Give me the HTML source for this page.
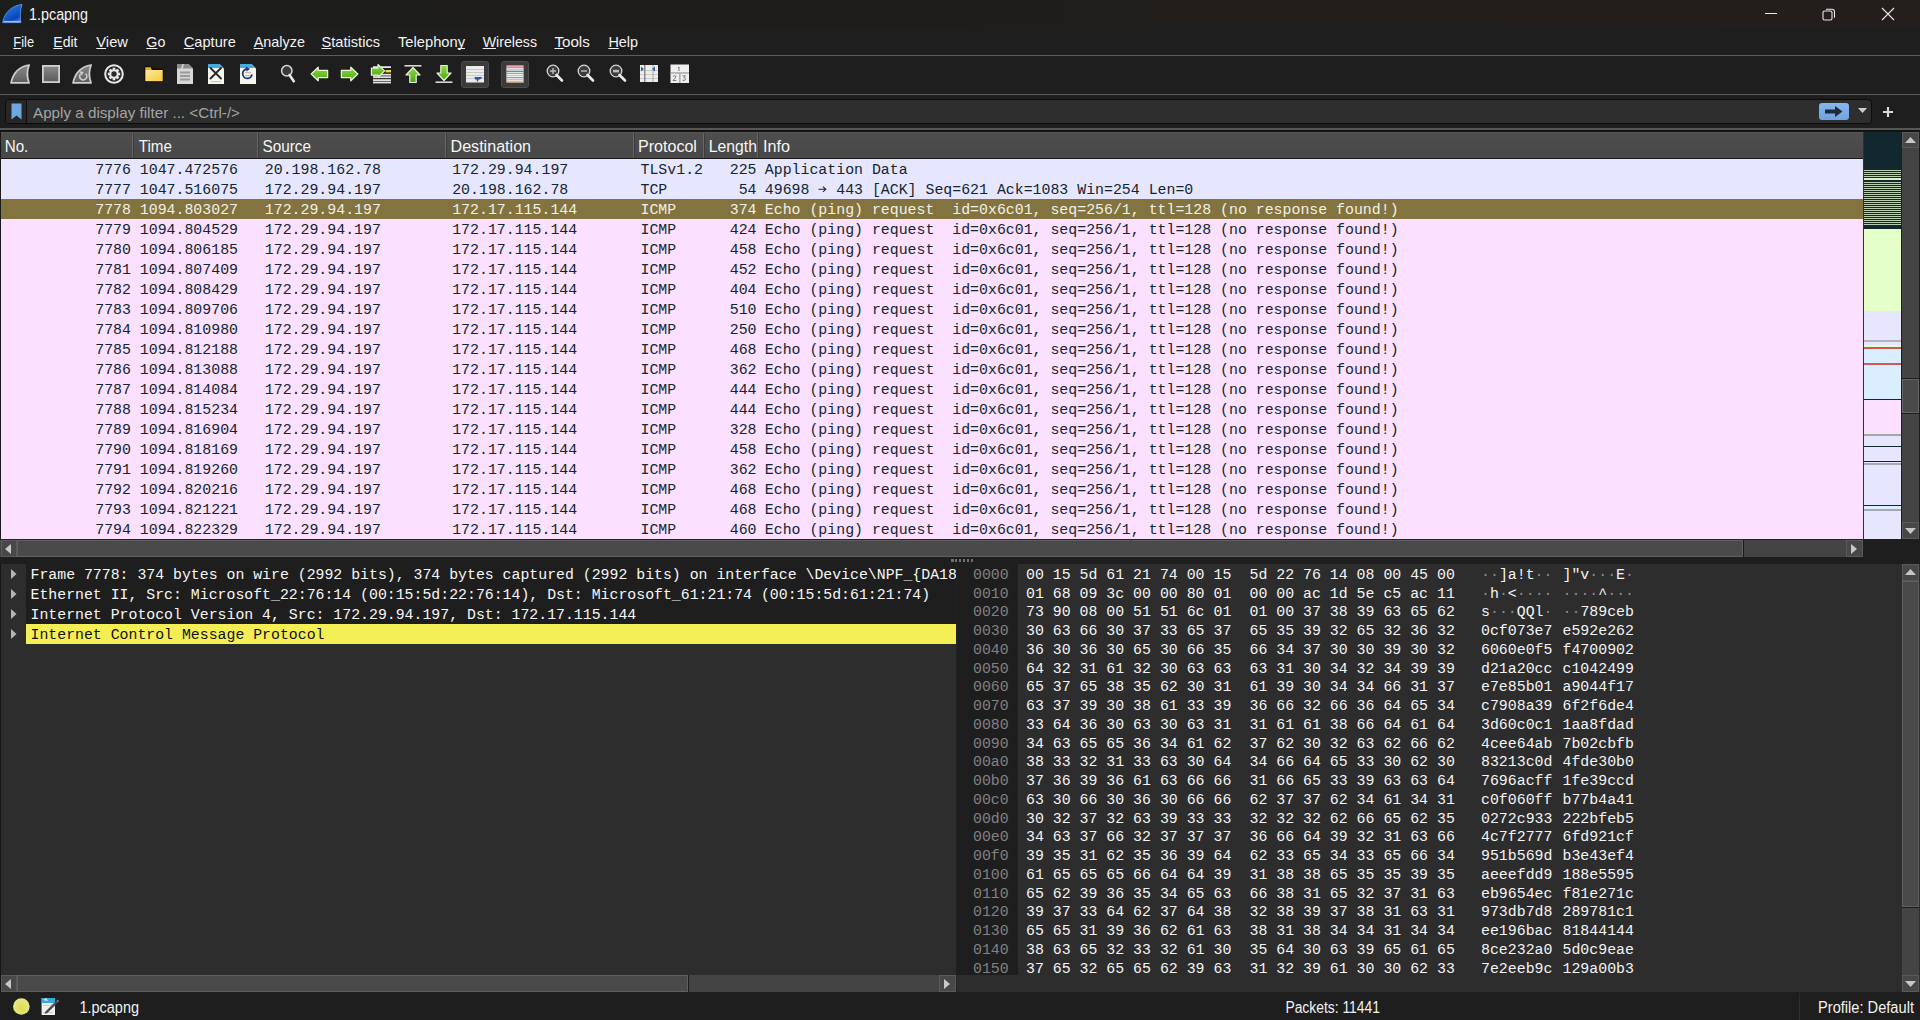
<!DOCTYPE html><html><head><meta charset="utf-8"><style>
*{margin:0;padding:0;box-sizing:border-box}
html,body{width:1920px;height:1020px;overflow:hidden;background:#1e1e1e;font-family:"Liberation Sans",sans-serif;color:#fff}
.a{position:absolute}
.mi{position:absolute;top:33px;font-size:15px;color:#f2f2f2;white-space:pre}
.mi u{text-decoration:underline;text-underline-offset:2px}
.hl{position:absolute;left:0;width:1920px;height:1px;background:#5c5c5c}
.m{font-family:"Liberation Mono",monospace;white-space:pre}
.t{position:absolute;white-space:pre}
</style></head><body>
<div class="a" style="left:0;top:0;width:1920px;height:28px;background:linear-gradient(90deg,#1d1d1b 0%,#1f1d1b 50%,#241e1c 100%)"></div>
<svg class="a" style="left:0;top:0" width="26" height="26" viewBox="0 0 26 26"><defs><linearGradient id="lg1" x1="0" y1="0" x2="0.6" y2="1"><stop offset="0" stop-color="#2a86f0"/><stop offset="0.85" stop-color="#0b44b8"/><stop offset="1" stop-color="#3a6ad0"/></linearGradient></defs><path d="M22 4.4 C13 5.5 5 11 2.6 22.6 L20.9 22.6 C19.9 17 19.9 10 22 4.4Z" fill="url(#lg1)" stroke="#5a9ae8" stroke-width="0.9" stroke-linejoin="round"/><path d="M3.5 21.6 L20.4 21.6" stroke="#a8bce8" stroke-width="1.4"/></svg>
<div class="a" style="left:1765px;top:13px;width:12px;height:1px;background:#e8e8e8"></div>
<svg class="a" style="left:1822px;top:7px" width="14" height="14" viewBox="0 0 14 14"><path d="M3.5 3.5 h7 a1.5 1.5 0 0 1 1.5 1.5 v0" fill="none"/><rect x="1" y="4" width="9" height="9" rx="1.5" fill="none" stroke="#e8e8e8" stroke-width="1.1"/><path d="M4 2.2 h6 a2.5 2.5 0 0 1 2.5 2.5 v6" fill="none" stroke="#e8e8e8" stroke-width="1.1"/></svg>
<svg class="a" style="left:1881px;top:7px" width="14" height="14" viewBox="0 0 14 14"><path d="M1 1 L13 13 M13 1 L1 13" stroke="#e8e8e8" stroke-width="1.1"/></svg>
<div class="hl" style="top:55px"></div>
<div class="hl" style="top:94px"></div>
<svg width="0" height="0" class="a"><defs><linearGradient id="gg" x1="0" y1="0" x2="0" y2="1"><stop offset="0" stop-color="#8a8a8a"/><stop offset="1" stop-color="#5c5c5c"/></linearGradient><linearGradient id="fold" x1="0" y1="0" x2="1" y2="1"><stop offset="0" stop-color="#fbe9a0"/><stop offset="1" stop-color="#f9c93a"/></linearGradient><linearGradient id="grn" x1="0" y1="0" x2="0" y2="1"><stop offset="0" stop-color="#8ed84a"/><stop offset="1" stop-color="#4aa80e"/></linearGradient></defs></svg>
<svg class="a" style="left:9px;top:62px" width="22" height="24" viewBox="0 0 22 24"><path d="M20.2 3 C12 4.2 4.5 9.5 2 20.9 L20 20.9 C18 15.2 17.6 8.8 20.2 3Z" fill="url(#gg)" stroke="#cfcfcf" stroke-width="1.7" stroke-linejoin="round"/></svg>
<svg class="a" style="left:41px;top:64px" width="20" height="20" viewBox="0 0 20 20"><rect x="1.9" y="1.9" width="16.2" height="16.2" fill="url(#gg)" stroke="#d0d0d0" stroke-width="1.8"/></svg>
<svg class="a" style="left:71px;top:62px" width="22" height="24" viewBox="0 0 22 24"><path d="M20.2 3 C12 4.2 4.5 9.5 2 20.9 L20 20.9 C18 15.2 17.6 8.8 20.2 3Z" fill="url(#gg)" stroke="#cfcfcf" stroke-width="1.7" stroke-linejoin="round"/><path d="M14.5 11.5 A3.6 3.6 0 1 1 9.5 12" fill="none" stroke="#d0d0d0" stroke-width="1.5"/><path d="M8 9 L12.5 10 L11 13.5Z" fill="#d0d0d0"/></svg>
<svg class="a" style="left:104px;top:64px" width="20" height="20" viewBox="0 0 20 20"><circle cx="10" cy="10" r="8.8" fill="#262626" stroke="#e8e8e8" stroke-width="2"/><polygon points="8.75,3.83 11.25,3.83 11.49,5.65 12.02,5.87 13.48,4.75 15.25,6.52 14.13,7.98 14.35,8.51 16.17,8.75 16.17,11.25 14.35,11.49 14.13,12.02 15.25,13.48 13.48,15.25 12.02,14.13 11.49,14.35 11.25,16.17 8.75,16.17 8.51,14.35 7.98,14.13 6.52,15.25 4.75,13.48 5.87,12.02 5.65,11.49 3.83,11.25 3.83,8.75 5.65,8.51 5.87,7.98 4.75,6.52 6.52,4.75 7.98,5.87 8.51,5.65" fill="#e6e6e6"/><circle cx="10" cy="10" r="2.7" fill="#2a2a2a"/></svg>
<svg class="a" style="left:143px;top:65px" width="22" height="18" viewBox="0 0 22 18"><path d="M2 2 h6 l1.5 2 h10.5 v12.5 h-18Z" fill="#1a0e00" stroke="#1a0e00" stroke-width="1.3"/><path d="M2.3 5 h17.4 v11.2 h-17.4Z" fill="url(#fold)"/><path d="M2.3 2.3 h5.5 l1 2.7 h-6.5Z" fill="#f0b020"/></svg>
<svg class="a" style="left:176px;top:63px" width="18" height="22" viewBox="0 0 18 22"><path d="M1 1 h11.5 l4.5 4.5 v15.5 h-16Z" fill="#d8d8d8"/><path d="M1 1 h11.5 l4.5 4.5 h-16Z" fill="#8c8c8c"/><path d="M5 5.5 L6.5 1 h1.3 L7 5.5Z" fill="#d8d8d8"/><g fill="#9a9a9a"><rect x="4" y="8.5" width="10" height="2"/><rect x="4" y="12" width="10" height="2"/><rect x="4" y="15.5" width="10" height="2"/></g></svg>
<svg class="a" style="left:207px;top:63px" width="18" height="22" viewBox="0 0 18 22"><path d="M1 1 h11.5 l4.5 4.5 v15.5 h-16Z" fill="#f4f6f0"/><path d="M1 1 h11.5 l4 4 h-15.5Z" fill="#4aa8e0"/><g fill="#c8c8c8"><rect x="4" y="18" width="10" height="1.2"/></g><path d="M3.5 5 L14 15.5 M14 5 L3.5 15.5" stroke="#2a2a2a" stroke-width="1.9" stroke-linecap="round"/></svg>
<svg class="a" style="left:239px;top:63px" width="18" height="22" viewBox="0 0 18 22"><path d="M1 1 h11.5 l4.5 4.5 v15.5 h-16Z" fill="#f4f6f0"/><path d="M1 1 h11.5 l4 4 h-15.5Z" fill="#4aa8e0"/><g fill="#d0b8b8"><rect x="6" y="9" width="6" height="1.2"/><rect x="6" y="12" width="6" height="1.2"/></g><path d="M13 11.5 A4.7 4.7 0 1 1 8.5 6" fill="none" stroke="#203a70" stroke-width="1.8"/><path d="M7 3.5 L11 6 L7.5 8.5Z" fill="#203a70"/></svg>
<svg class="a" style="left:280px;top:64px" width="17" height="20" viewBox="0 0 17 20"><circle cx="6.8" cy="6.8" r="5.2" fill="#3a3a3a" stroke="#d8d8d8" stroke-width="1.5"/><path d="M9.5 11 L13.8 17.3" stroke="#e8e8e8" stroke-width="2.6" stroke-linecap="round"/></svg>
<svg class="a" style="left:310px;top:66px" width="19" height="16" viewBox="0 0 19 16"><g><path d="M1.2 8 L8.2 1.2 V4.4 H17.6 V11.6 H8.2 V14.8Z" fill="url(#grn)" stroke="#e8f5d8" stroke-width="1.3" stroke-linejoin="round"/></g></svg>
<svg class="a" style="left:340px;top:66px" width="19" height="16" viewBox="0 0 19 16"><g transform="translate(19,0) scale(-1,1)"><path d="M1.2 8 L8.2 1.2 V4.4 H17.6 V11.6 H8.2 V14.8Z" fill="url(#grn)" stroke="#e8f5d8" stroke-width="1.3" stroke-linejoin="round"/></g></svg>
<svg class="a" style="left:370px;top:62px" width="22" height="22" viewBox="0 0 22 22"><g fill="#e2e2e2"><rect x="3" y="4.2" width="18" height="1.8"/><rect x="3" y="11.8" width="18" height="1.8"/><rect x="3" y="14.3" width="18" height="1.8"/><rect x="3" y="17.2" width="18" height="1.8"/><rect x="3" y="19.6" width="18" height="1.8"/></g><rect x="3" y="14.3" width="4" height="1.8" fill="#f0c8c8"/><rect x="15.5" y="8" width="5.5" height="2.4" fill="#ecd850"/><path d="M1.4 6.2 H8 V2.5 L14.6 8.9 L8 15.3 V13.2 H1.4Z" fill="url(#grn)" stroke="#e4f5d0" stroke-width="1.2" stroke-linejoin="round"/></svg>
<svg class="a" style="left:403px;top:64px" width="20" height="20" viewBox="0 0 20 20"><rect x="1.5" y="1" width="17" height="1.6" fill="#d8d8d8"/><path d="M10 3.5 L17 11 H13.2 V18.5 H6.8 V11 H3Z" fill="url(#grn)" stroke="#e8f5d8" stroke-width="1.2" stroke-linejoin="round"/></svg>
<svg class="a" style="left:434px;top:64px" width="20" height="20" viewBox="0 0 20 20"><rect x="1.5" y="17.4" width="17" height="1.6" fill="#d8d8d8"/><path d="M10 16.5 L17 9 H13.2 V1.5 H6.8 V9 H3Z" fill="url(#grn)" stroke="#e8f5d8" stroke-width="1.2" stroke-linejoin="round"/></svg>
<div class="a" style="left:461px;top:61px;width:28px;height:27px;background:#3b3b3b;border:1px solid #4c4c4c;border-radius:3px"></div>
<svg class="a" style="left:465px;top:65px" width="20" height="18" viewBox="0 0 20 18"><rect x="1" y="1" width="18" height="16.5" fill="#ececec"/><g fill="#c9c9c9"><rect x="1" y="4" width="18" height="1"/><rect x="1" y="7" width="18" height="1"/><rect x="1" y="10" width="18" height="1"/><rect x="1" y="13" width="18" height="1"/></g><path d="M9.5 12 h8 l-2.5 2.5 h-1.5 l-0.5 2 h-1 l-0.5-2 h-1.5Z" fill="#2b5aa8"/></svg>
<div class="a" style="left:501px;top:61px;width:28px;height:27px;background:#3b3b3b;border:1px solid #4c4c4c;border-radius:3px"></div>
<svg class="a" style="left:506px;top:65px" width="18" height="18" viewBox="0 0 18 18"><rect x="0.5" y="0.5" width="17" height="17" fill="#f4f4f4"/><g><rect x="0.5" y="1.5" width="17" height="1.2" fill="#e05a5a"/><rect x="0.5" y="3.6" width="17" height="1.2" fill="#f0a8b0"/><rect x="0.5" y="5.7" width="17" height="1.2" fill="#4a7ad8"/><rect x="0.5" y="7.8" width="17" height="1.2" fill="#78c850"/><rect x="0.5" y="9.9" width="17" height="1.2" fill="#a8e088"/><rect x="0.5" y="12" width="17" height="1.2" fill="#9090e0"/><rect x="0.5" y="14.1" width="17" height="1.2" fill="#f0a8a0"/><rect x="0.5" y="16" width="17" height="1.2" fill="#e8c840"/></g></svg>
<svg class="a" style="left:546px;top:64px" width="19" height="20" viewBox="0 0 19 20"><circle cx="7" cy="7" r="5.8" fill="#3c3c3c" stroke="#d6d6d6" stroke-width="1.3"/><path d="M4 7 H10 M7 4 V10" stroke="#bdbdbd" stroke-width="1.4"/><path d="M10.5 11 L16 16.5" stroke="#ececec" stroke-width="2.6" stroke-linecap="round"/></svg>
<svg class="a" style="left:577px;top:64px" width="19" height="20" viewBox="0 0 19 20"><circle cx="7" cy="7" r="5.8" fill="#3c3c3c" stroke="#d6d6d6" stroke-width="1.3"/><path d="M4 7 H10" stroke="#bdbdbd" stroke-width="1.4"/><path d="M10.5 11 L16 16.5" stroke="#ececec" stroke-width="2.6" stroke-linecap="round"/></svg>
<svg class="a" style="left:609px;top:64px" width="19" height="20" viewBox="0 0 19 20"><circle cx="7" cy="7" r="5.8" fill="#3c3c3c" stroke="#d6d6d6" stroke-width="1.3"/><rect x="4" y="5.8" width="6" height="2.6" fill="#bdbdbd"/><path d="M10.5 11 L16 16.5" stroke="#ececec" stroke-width="2.6" stroke-linecap="round"/></svg>
<svg class="a" style="left:639px;top:64px" width="20" height="19" viewBox="0 0 20 19"><rect x="1" y="1" width="18" height="17" fill="#ededed"/><g fill="#c8c8c8"><rect x="1" y="6" width="18" height="1"/><rect x="1" y="10" width="18" height="1"/><rect x="1" y="14" width="18" height="1"/></g><rect x="5" y="1" width="1.5" height="17" fill="#8a8a8a"/><rect x="13.5" y="1" width="1" height="17" fill="#a8a8a8"/><path d="M2 2.5 L5 5 L2 7.5Z M16 2.5 L13 5 L16 7.5Z" fill="#3060b0"/></svg>
<svg class="a" style="left:670px;top:64px" width="20" height="20" viewBox="0 0 20 20"><rect x="0.5" y="0.5" width="18.5" height="18.5" fill="#efefef"/><rect x="0.5" y="8.3" width="18.5" height="1.3" fill="#a0a0a0"/><rect x="9.2" y="9" width="1.3" height="10" fill="#a0a0a0"/><path d="M9 3 V7 M8 3.8 L9 3" stroke="#707070" stroke-width="0.9" fill="none"/><path d="M3 12.5 Q4.5 11 6 12.3 Q6 13.5 3 16.5 H6.3" stroke="#707070" stroke-width="0.9" fill="none"/><path d="M12.6 11.8 H15.5 L13.8 13.6 Q16 13.8 15.4 15.6 Q14.5 17 12.5 16.2" stroke="#707070" stroke-width="0.9" fill="none"/></svg>
<div class="a" style="left:0;top:128px;width:1920px;height:2px;background:#575757"></div>
<div class="a" style="left:0;top:130px;width:1920px;height:2px;background:#141414"></div>
<div class="a" style="left:5px;top:99px;width:1867px;height:25px;background:#2e2e2e;border:1px solid #0c0c0c;border-radius:4px"></div>
<div class="a" style="left:6px;top:100px;width:21px;height:23px;background:#262626;border-right:1px solid #0c0c0c;border-radius:3px 0 0 3px"></div>
<svg class="a" style="left:11px;top:103px" width="11" height="17" viewBox="0 0 11 17"><path d="M0.5 0.5 H10.5 V16.5 L5.5 12.5 L0.5 16.5Z" fill="#6fa8e0"/></svg>
<div class="a" style="left:1819px;top:103px;width:30px;height:17px;background:linear-gradient(#86b6ec,#6fa2e0);border-radius:3px"></div>
<svg class="a" style="left:1823px;top:104px" width="22" height="15" viewBox="0 0 22 15"><path d="M2 5.5 H12 V2 L19.5 7.5 L12 13 V9.5 H2Z" fill="#1f2a36"/></svg>
<svg class="a" style="left:1857px;top:107px" width="11" height="7" viewBox="0 0 11 7"><path d="M1 1 H10 L5.5 6Z" fill="#d0d0d0"/></svg>
<svg class="a" style="left:1882px;top:106px" width="12" height="12" viewBox="0 0 12 12"><path d="M6 1 V11 M1 6 H11" stroke="#d8d8d8" stroke-width="2.2"/></svg>
<div class="a" style="left:0;top:132px;width:1863px;height:27px;background:linear-gradient(#4e4e4e,#484848);border-top:1px solid #555;border-bottom:1px solid #1a1a1a"></div>
<div class="a" style="left:132px;top:133px;width:1px;height:25px;background:#676767"></div>
<div class="a" style="left:133px;top:133px;width:1px;height:25px;background:#3c3c3c"></div>
<div class="a" style="left:257px;top:133px;width:1px;height:25px;background:#676767"></div>
<div class="a" style="left:258px;top:133px;width:1px;height:25px;background:#3c3c3c"></div>
<div class="a" style="left:445px;top:133px;width:1px;height:25px;background:#676767"></div>
<div class="a" style="left:446px;top:133px;width:1px;height:25px;background:#3c3c3c"></div>
<div class="a" style="left:633px;top:133px;width:1px;height:25px;background:#676767"></div>
<div class="a" style="left:634px;top:133px;width:1px;height:25px;background:#3c3c3c"></div>
<div class="a" style="left:703px;top:133px;width:1px;height:25px;background:#676767"></div>
<div class="a" style="left:704px;top:133px;width:1px;height:25px;background:#3c3c3c"></div>
<div class="a" style="left:757px;top:133px;width:1px;height:25px;background:#676767"></div>
<div class="a" style="left:758px;top:133px;width:1px;height:25px;background:#3c3c3c"></div>
<style>.pr{position:absolute;left:1px;width:1862px;height:20px}.pr span{position:absolute;top:1px;line-height:20px;font-family:"Liberation Mono",monospace;font-size:14.88px;white-space:pre;color:#12272e}.tcp{background:#e7e6ff}.icmp{background:#fce0ff}.sel{background:#83733f}.sel span{color:#f2efe6}</style>
<div class="pr tcp" style="top:159px"><span style="left:94.28px">7776</span><span style="left:138.80px">1047.472576</span><span style="left:263.80px">20.198.162.78</span><span style="left:451.20px">172.29.94.197</span><span style="left:639.50px">TLSv1.2</span><span style="left:728.71px">225</span><span style="left:763.80px">Application Data</span></div>
<div class="pr tcp" style="top:179px"><span style="left:94.28px">7777</span><span style="left:138.80px">1047.516075</span><span style="left:263.80px">172.29.94.197</span><span style="left:451.20px">20.198.162.78</span><span style="left:639.50px">TCP</span><span style="left:737.64px">54</span><span style="left:763.80px">49698 <svg width="8.93" height="10" viewBox="0 0 9 10" style="vertical-align:0"><path d="M0.5 5.3 H7.8 M5 2.6 L7.9 5.3 L5 8" fill="none" stroke="#12272e" stroke-width="1.05"/></svg> 443 [ACK] Seq=621 Ack=1083 Win=254 Len=0</span></div>
<div class="pr sel" style="top:199px"><span style="left:94.28px">7778</span><span style="left:138.80px">1094.803027</span><span style="left:263.80px">172.29.94.197</span><span style="left:451.20px">172.17.115.144</span><span style="left:639.50px">ICMP</span><span style="left:728.71px">374</span><span style="left:763.80px">Echo (ping) request  id=0x6c01, seq=256/1, ttl=128 (no response found!)</span></div>
<div class="pr icmp" style="top:219px"><span style="left:94.28px">7779</span><span style="left:138.80px">1094.804529</span><span style="left:263.80px">172.29.94.197</span><span style="left:451.20px">172.17.115.144</span><span style="left:639.50px">ICMP</span><span style="left:728.71px">424</span><span style="left:763.80px">Echo (ping) request  id=0x6c01, seq=256/1, ttl=128 (no response found!)</span></div>
<div class="pr icmp" style="top:239px"><span style="left:94.28px">7780</span><span style="left:138.80px">1094.806185</span><span style="left:263.80px">172.29.94.197</span><span style="left:451.20px">172.17.115.144</span><span style="left:639.50px">ICMP</span><span style="left:728.71px">458</span><span style="left:763.80px">Echo (ping) request  id=0x6c01, seq=256/1, ttl=128 (no response found!)</span></div>
<div class="pr icmp" style="top:259px"><span style="left:94.28px">7781</span><span style="left:138.80px">1094.807409</span><span style="left:263.80px">172.29.94.197</span><span style="left:451.20px">172.17.115.144</span><span style="left:639.50px">ICMP</span><span style="left:728.71px">452</span><span style="left:763.80px">Echo (ping) request  id=0x6c01, seq=256/1, ttl=128 (no response found!)</span></div>
<div class="pr icmp" style="top:279px"><span style="left:94.28px">7782</span><span style="left:138.80px">1094.808429</span><span style="left:263.80px">172.29.94.197</span><span style="left:451.20px">172.17.115.144</span><span style="left:639.50px">ICMP</span><span style="left:728.71px">404</span><span style="left:763.80px">Echo (ping) request  id=0x6c01, seq=256/1, ttl=128 (no response found!)</span></div>
<div class="pr icmp" style="top:299px"><span style="left:94.28px">7783</span><span style="left:138.80px">1094.809706</span><span style="left:263.80px">172.29.94.197</span><span style="left:451.20px">172.17.115.144</span><span style="left:639.50px">ICMP</span><span style="left:728.71px">510</span><span style="left:763.80px">Echo (ping) request  id=0x6c01, seq=256/1, ttl=128 (no response found!)</span></div>
<div class="pr icmp" style="top:319px"><span style="left:94.28px">7784</span><span style="left:138.80px">1094.810980</span><span style="left:263.80px">172.29.94.197</span><span style="left:451.20px">172.17.115.144</span><span style="left:639.50px">ICMP</span><span style="left:728.71px">250</span><span style="left:763.80px">Echo (ping) request  id=0x6c01, seq=256/1, ttl=128 (no response found!)</span></div>
<div class="pr icmp" style="top:339px"><span style="left:94.28px">7785</span><span style="left:138.80px">1094.812188</span><span style="left:263.80px">172.29.94.197</span><span style="left:451.20px">172.17.115.144</span><span style="left:639.50px">ICMP</span><span style="left:728.71px">468</span><span style="left:763.80px">Echo (ping) request  id=0x6c01, seq=256/1, ttl=128 (no response found!)</span></div>
<div class="pr icmp" style="top:359px"><span style="left:94.28px">7786</span><span style="left:138.80px">1094.813088</span><span style="left:263.80px">172.29.94.197</span><span style="left:451.20px">172.17.115.144</span><span style="left:639.50px">ICMP</span><span style="left:728.71px">362</span><span style="left:763.80px">Echo (ping) request  id=0x6c01, seq=256/1, ttl=128 (no response found!)</span></div>
<div class="pr icmp" style="top:379px"><span style="left:94.28px">7787</span><span style="left:138.80px">1094.814084</span><span style="left:263.80px">172.29.94.197</span><span style="left:451.20px">172.17.115.144</span><span style="left:639.50px">ICMP</span><span style="left:728.71px">444</span><span style="left:763.80px">Echo (ping) request  id=0x6c01, seq=256/1, ttl=128 (no response found!)</span></div>
<div class="pr icmp" style="top:399px"><span style="left:94.28px">7788</span><span style="left:138.80px">1094.815234</span><span style="left:263.80px">172.29.94.197</span><span style="left:451.20px">172.17.115.144</span><span style="left:639.50px">ICMP</span><span style="left:728.71px">444</span><span style="left:763.80px">Echo (ping) request  id=0x6c01, seq=256/1, ttl=128 (no response found!)</span></div>
<div class="pr icmp" style="top:419px"><span style="left:94.28px">7789</span><span style="left:138.80px">1094.816904</span><span style="left:263.80px">172.29.94.197</span><span style="left:451.20px">172.17.115.144</span><span style="left:639.50px">ICMP</span><span style="left:728.71px">328</span><span style="left:763.80px">Echo (ping) request  id=0x6c01, seq=256/1, ttl=128 (no response found!)</span></div>
<div class="pr icmp" style="top:439px"><span style="left:94.28px">7790</span><span style="left:138.80px">1094.818169</span><span style="left:263.80px">172.29.94.197</span><span style="left:451.20px">172.17.115.144</span><span style="left:639.50px">ICMP</span><span style="left:728.71px">458</span><span style="left:763.80px">Echo (ping) request  id=0x6c01, seq=256/1, ttl=128 (no response found!)</span></div>
<div class="pr icmp" style="top:459px"><span style="left:94.28px">7791</span><span style="left:138.80px">1094.819260</span><span style="left:263.80px">172.29.94.197</span><span style="left:451.20px">172.17.115.144</span><span style="left:639.50px">ICMP</span><span style="left:728.71px">362</span><span style="left:763.80px">Echo (ping) request  id=0x6c01, seq=256/1, ttl=128 (no response found!)</span></div>
<div class="pr icmp" style="top:479px"><span style="left:94.28px">7792</span><span style="left:138.80px">1094.820216</span><span style="left:263.80px">172.29.94.197</span><span style="left:451.20px">172.17.115.144</span><span style="left:639.50px">ICMP</span><span style="left:728.71px">468</span><span style="left:763.80px">Echo (ping) request  id=0x6c01, seq=256/1, ttl=128 (no response found!)</span></div>
<div class="pr icmp" style="top:499px"><span style="left:94.28px">7793</span><span style="left:138.80px">1094.821221</span><span style="left:263.80px">172.29.94.197</span><span style="left:451.20px">172.17.115.144</span><span style="left:639.50px">ICMP</span><span style="left:728.71px">468</span><span style="left:763.80px">Echo (ping) request  id=0x6c01, seq=256/1, ttl=128 (no response found!)</span></div>
<div class="pr icmp" style="top:519px"><span style="left:94.28px">7794</span><span style="left:138.80px">1094.822329</span><span style="left:263.80px">172.29.94.197</span><span style="left:451.20px">172.17.115.144</span><span style="left:639.50px">ICMP</span><span style="left:728.71px">460</span><span style="left:763.80px">Echo (ping) request  id=0x6c01, seq=256/1, ttl=128 (no response found!)</span></div>
<div class="a" style="left:0;top:132px;width:1px;height:408px;background:#1a1a1a"></div>
<div class="a" style="left:1863px;top:132px;width:1px;height:408px;background:#2a2a2a;"></div>
<div class="a" style="left:1864px;top:170px;width:37px;height:56px;background:repeating-linear-gradient(#b9cdb2 0 1px,#12272e 1px 2px)"></div>
<div class="a" style="left:1864px;top:178px;width:37px;height:2px;background:#d8f0c8"></div>
<div class="a" style="left:1864px;top:180px;width:37px;height:2px;background:#12272e"></div>
<div class="a" style="left:1864px;top:132px;width:37px;height:38px;background:#12272e;"></div>
<div class="a" style="left:1864px;top:226px;width:37px;height:3px;background:#12272e;"></div>
<div class="a" style="left:1864px;top:229px;width:37px;height:82px;background:#e4ffc7;"></div>
<div class="a" style="left:1864px;top:311px;width:37px;height:29px;background:#e7e6ff;"></div>
<div class="a" style="left:1864px;top:340px;width:37px;height:2px;background:#b4b4b8;"></div>
<div class="a" style="left:1864px;top:342px;width:37px;height:3px;background:#e7e6ff;"></div>
<div class="a" style="left:1864px;top:345px;width:37px;height:2px;background:#e4ffc7;"></div>
<div class="a" style="left:1864px;top:347px;width:37px;height:2px;background:#c85a5a;"></div>
<div class="a" style="left:1864px;top:349px;width:37px;height:14px;background:#daeeff;"></div>
<div class="a" style="left:1864px;top:363px;width:37px;height:2px;background:#c85a5a;"></div>
<div class="a" style="left:1864px;top:365px;width:37px;height:34px;background:#daeeff;"></div>
<div class="a" style="left:1864px;top:399px;width:37px;height:1px;background:#12272e;"></div>
<div class="a" style="left:1864px;top:400px;width:37px;height:34px;background:#fce0ff;"></div>
<div class="a" style="left:1864px;top:434px;width:37px;height:2px;background:#a8a8a0;"></div>
<div class="a" style="left:1864px;top:436px;width:37px;height:10px;background:#e7e6ff;"></div>
<div class="a" style="left:1864px;top:446px;width:37px;height:1px;background:#12272e;"></div>
<div class="a" style="left:1864px;top:447px;width:37px;height:14px;background:#e7e6ff;"></div>
<div class="a" style="left:1864px;top:461px;width:37px;height:1px;background:#12272e;"></div>
<div class="a" style="left:1864px;top:462px;width:37px;height:1px;background:#e7e6ff;"></div>
<div class="a" style="left:1864px;top:463px;width:37px;height:2px;background:#a8a8b0;"></div>
<div class="a" style="left:1864px;top:465px;width:37px;height:40px;background:#e7e6ff;"></div>
<div class="a" style="left:1864px;top:505px;width:37px;height:1px;background:#12272e;"></div>
<div class="a" style="left:1864px;top:506px;width:37px;height:3px;background:#daeeff;"></div>
<div class="a" style="left:1864px;top:509px;width:37px;height:2px;background:#a8a8b0;"></div>
<div class="a" style="left:1864px;top:511px;width:37px;height:28px;background:#e7e6ff;"></div>
<div class="a" style="left:1863px;top:132px;width:1px;height:408px;background:#303030;"></div>
<div class="a" style="left:1901px;top:132px;width:19px;height:408px;background:#1e1e1e;"></div>
<div class="a" style="left:1902px;top:132px;width:17px;height:407px;background:#444444;"></div>
<div class="a" style="left:1902px;top:132px;width:17px;height:16px;background:#484848;border:1px solid #5a5a5a"></div>
<svg class="a" style="left:1905px;top:137px" width="11" height="6" viewBox="0 0 11 6"><path d="M0 6 L5.5 0 L11 6Z" fill="#c8c8c8"/></svg>
<div class="a" style="left:1902px;top:378px;width:17px;height:1px;background:#1c1c1c;"></div>
<div class="a" style="left:1902px;top:379px;width:17px;height:34px;background:#4a4a4a;border:1px solid #656565"></div>
<div class="a" style="left:1902px;top:413px;width:17px;height:1px;background:#1c1c1c;"></div>
<div class="a" style="left:1902px;top:522px;width:17px;height:17px;background:#484848;border:1px solid #5a5a5a"></div>
<svg class="a" style="left:1905px;top:528px" width="11" height="6" viewBox="0 0 11 6"><path d="M0 0 L11 0 L5.5 6Z" fill="#c8c8c8"/></svg>
<div class="a" style="left:0px;top:539px;width:1863px;height:1px;background:#2a2030;"></div>
<div class="a" style="left:0px;top:540px;width:1863px;height:17px;background:#444444;"></div>
<div class="a" style="left:1px;top:540px;width:16px;height:17px;background:#484848;border:1px solid #5a5a5a"></div>
<svg class="a" style="left:5px;top:544px" width="6" height="10" viewBox="0 0 6 10"><path d="M6 0 L0 5.0 L6 10Z" fill="#c8c8c8"/></svg>
<div class="a" style="left:17px;top:540px;width:1726px;height:17px;background:#4a4a4a;border:1px solid #606060"></div>
<div class="a" style="left:1743px;top:540px;width:1px;height:17px;background:#1c1c1c;"></div>
<div class="a" style="left:1846px;top:540px;width:17px;height:17px;background:#484848;border:1px solid #5a5a5a"></div>
<svg class="a" style="left:1851px;top:544px" width="6" height="10" viewBox="0 0 6 10"><path d="M0 0 L6 5.0 L0 10Z" fill="#c8c8c8"/></svg>
<div class="a" style="left:1863px;top:540px;width:57px;height:17px;background:#1e1e1e;"></div>
<div class="a" style="left:0px;top:557px;width:1920px;height:7px;background:#1e1e1e;"></div>
<div class="a" style="left:951.0px;top:559px;width:2.6px;height:3px;background:#707070;"></div>
<div class="a" style="left:954.9px;top:559px;width:2.6px;height:3px;background:#707070;"></div>
<div class="a" style="left:958.8px;top:559px;width:2.6px;height:3px;background:#707070;"></div>
<div class="a" style="left:962.7px;top:559px;width:2.6px;height:3px;background:#707070;"></div>
<div class="a" style="left:966.6px;top:559px;width:2.6px;height:3px;background:#707070;"></div>
<div class="a" style="left:970.5px;top:559px;width:2.6px;height:3px;background:#707070;"></div>
<div class="a" style="left:0px;top:564px;width:957px;height:428px;background:#2d2d2d;"></div>
<div class="a" style="left:0px;top:564px;width:1px;height:428px;background:#151515;"></div>
<div class="a" style="left:26px;top:564px;width:930px;height:80px;background:#1e1e1e;"></div>
<div class="a" style="left:956px;top:564px;width:1px;height:428px;background:#222;"></div>
<div class="a" style="left:26px;top:624px;width:930px;height:20px;background:#f4ee55;"></div>
<div class="a" style="left:26px;top:564px;width:930px;height:80px;overflow:hidden">
<div class="t m" style="left:4.5px;top:1px;line-height:20px;font-size:14.85px;color:#f6f6f6">Frame 7778: 374 bytes on wire (2992 bits), 374 bytes captured (2992 bits) on interface \Device\NPF_{DA18</div>
<div class="t m" style="left:4.5px;top:21px;line-height:20px;font-size:14.85px;color:#f6f6f6">Ethernet II, Src: Microsoft_22:76:14 (00:15:5d:22:76:14), Dst: Microsoft_61:21:74 (00:15:5d:61:21:74)</div>
<div class="t m" style="left:4.5px;top:41px;line-height:20px;font-size:14.85px;color:#f6f6f6">Internet Protocol Version 4, Src: 172.29.94.197, Dst: 172.17.115.144</div>
<div class="t m" style="left:4.5px;top:61px;line-height:20px;font-size:14.85px;color:#111">Internet Control Message Protocol</div>
</div>
<svg class="a" style="left:11px;top:569px" width="6" height="10" viewBox="0 0 6 10"><path d="M0 0 L5.5 5 L0 10Z" fill="#b4b4b4"/></svg>
<svg class="a" style="left:11px;top:589px" width="6" height="10" viewBox="0 0 6 10"><path d="M0 0 L5.5 5 L0 10Z" fill="#b4b4b4"/></svg>
<svg class="a" style="left:11px;top:609px" width="6" height="10" viewBox="0 0 6 10"><path d="M0 0 L5.5 5 L0 10Z" fill="#b4b4b4"/></svg>
<svg class="a" style="left:11px;top:629px" width="6" height="10" viewBox="0 0 6 10"><path d="M0 0 L5.5 5 L0 10Z" fill="#b4b4b4"/></svg>
<div class="a" style="left:1px;top:975px;width:955px;height:17px;background:#444444;"></div>
<div class="a" style="left:1px;top:975px;width:16px;height:17px;background:#484848;border:1px solid #5a5a5a"></div>
<svg class="a" style="left:5px;top:979px" width="6" height="10" viewBox="0 0 6 10"><path d="M6 0 L0 5.0 L6 10Z" fill="#c8c8c8"/></svg>
<div class="a" style="left:17px;top:975px;width:671px;height:17px;background:#4a4a4a;border:1px solid #606060"></div>
<div class="a" style="left:688px;top:975px;width:1px;height:17px;background:#1c1c1c;"></div>
<div class="a" style="left:939px;top:975px;width:17px;height:17px;background:#484848;border:1px solid #5a5a5a"></div>
<svg class="a" style="left:944px;top:979px" width="6" height="10" viewBox="0 0 6 10"><path d="M0 0 L6 5.0 L0 10Z" fill="#c8c8c8"/></svg>
<div class="a" style="left:957px;top:564px;width:963px;height:428px;background:#2d2d2d;"></div>
<div class="a" style="left:957px;top:564px;width:61px;height:411px;background:#1e1e1e;"></div>
<style>.hx{position:absolute;line-height:18.75px;font-family:"Liberation Mono",monospace;font-size:14.88px;white-space:pre}.hx i{font-style:normal;color:#8a8a8a}</style>
<div class="hx" style="left:973px;top:565.90px;color:#828282">0000</div>
<div class="hx" style="left:1026px;top:565.90px;color:#f4f4f4">00 15 5d 61 21 74 00 15</div>
<div class="hx" style="left:1249.5px;top:565.90px;color:#f4f4f4">5d 22 76 14 08 00 45 00</div>
<div class="hx" style="left:1481px;top:565.90px;color:#f4f4f4"><i>·</i><i>·</i>]a!t<i>·</i><i>·</i></div>
<div class="hx" style="left:1562.5px;top:565.90px;color:#f4f4f4">]&quot;v<i>·</i><i>·</i><i>·</i>E<i>·</i></div>
<div class="hx" style="left:973px;top:584.65px;color:#828282">0010</div>
<div class="hx" style="left:1026px;top:584.65px;color:#f4f4f4">01 68 09 3c 00 00 80 01</div>
<div class="hx" style="left:1249.5px;top:584.65px;color:#f4f4f4">00 00 ac 1d 5e c5 ac 11</div>
<div class="hx" style="left:1481px;top:584.65px;color:#f4f4f4"><i>·</i>h<i>·</i>&lt;<i>·</i><i>·</i><i>·</i><i>·</i></div>
<div class="hx" style="left:1562.5px;top:584.65px;color:#f4f4f4"><i>·</i><i>·</i><i>·</i><i>·</i>^<i>·</i><i>·</i><i>·</i></div>
<div class="hx" style="left:973px;top:603.40px;color:#828282">0020</div>
<div class="hx" style="left:1026px;top:603.40px;color:#f4f4f4">73 90 08 00 51 51 6c 01</div>
<div class="hx" style="left:1249.5px;top:603.40px;color:#f4f4f4">01 00 37 38 39 63 65 62</div>
<div class="hx" style="left:1481px;top:603.40px;color:#f4f4f4">s<i>·</i><i>·</i><i>·</i>QQl<i>·</i></div>
<div class="hx" style="left:1562.5px;top:603.40px;color:#f4f4f4"><i>·</i><i>·</i>789ceb</div>
<div class="hx" style="left:973px;top:622.15px;color:#828282">0030</div>
<div class="hx" style="left:1026px;top:622.15px;color:#f4f4f4">30 63 66 30 37 33 65 37</div>
<div class="hx" style="left:1249.5px;top:622.15px;color:#f4f4f4">65 35 39 32 65 32 36 32</div>
<div class="hx" style="left:1481px;top:622.15px;color:#f4f4f4">0cf073e7</div>
<div class="hx" style="left:1562.5px;top:622.15px;color:#f4f4f4">e592e262</div>
<div class="hx" style="left:973px;top:640.90px;color:#828282">0040</div>
<div class="hx" style="left:1026px;top:640.90px;color:#f4f4f4">36 30 36 30 65 30 66 35</div>
<div class="hx" style="left:1249.5px;top:640.90px;color:#f4f4f4">66 34 37 30 30 39 30 32</div>
<div class="hx" style="left:1481px;top:640.90px;color:#f4f4f4">6060e0f5</div>
<div class="hx" style="left:1562.5px;top:640.90px;color:#f4f4f4">f4700902</div>
<div class="hx" style="left:973px;top:659.65px;color:#828282">0050</div>
<div class="hx" style="left:1026px;top:659.65px;color:#f4f4f4">64 32 31 61 32 30 63 63</div>
<div class="hx" style="left:1249.5px;top:659.65px;color:#f4f4f4">63 31 30 34 32 34 39 39</div>
<div class="hx" style="left:1481px;top:659.65px;color:#f4f4f4">d21a20cc</div>
<div class="hx" style="left:1562.5px;top:659.65px;color:#f4f4f4">c1042499</div>
<div class="hx" style="left:973px;top:678.40px;color:#828282">0060</div>
<div class="hx" style="left:1026px;top:678.40px;color:#f4f4f4">65 37 65 38 35 62 30 31</div>
<div class="hx" style="left:1249.5px;top:678.40px;color:#f4f4f4">61 39 30 34 34 66 31 37</div>
<div class="hx" style="left:1481px;top:678.40px;color:#f4f4f4">e7e85b01</div>
<div class="hx" style="left:1562.5px;top:678.40px;color:#f4f4f4">a9044f17</div>
<div class="hx" style="left:973px;top:697.15px;color:#828282">0070</div>
<div class="hx" style="left:1026px;top:697.15px;color:#f4f4f4">63 37 39 30 38 61 33 39</div>
<div class="hx" style="left:1249.5px;top:697.15px;color:#f4f4f4">36 66 32 66 36 64 65 34</div>
<div class="hx" style="left:1481px;top:697.15px;color:#f4f4f4">c7908a39</div>
<div class="hx" style="left:1562.5px;top:697.15px;color:#f4f4f4">6f2f6de4</div>
<div class="hx" style="left:973px;top:715.90px;color:#828282">0080</div>
<div class="hx" style="left:1026px;top:715.90px;color:#f4f4f4">33 64 36 30 63 30 63 31</div>
<div class="hx" style="left:1249.5px;top:715.90px;color:#f4f4f4">31 61 61 38 66 64 61 64</div>
<div class="hx" style="left:1481px;top:715.90px;color:#f4f4f4">3d60c0c1</div>
<div class="hx" style="left:1562.5px;top:715.90px;color:#f4f4f4">1aa8fdad</div>
<div class="hx" style="left:973px;top:734.65px;color:#828282">0090</div>
<div class="hx" style="left:1026px;top:734.65px;color:#f4f4f4">34 63 65 65 36 34 61 62</div>
<div class="hx" style="left:1249.5px;top:734.65px;color:#f4f4f4">37 62 30 32 63 62 66 62</div>
<div class="hx" style="left:1481px;top:734.65px;color:#f4f4f4">4cee64ab</div>
<div class="hx" style="left:1562.5px;top:734.65px;color:#f4f4f4">7b02cbfb</div>
<div class="hx" style="left:973px;top:753.40px;color:#828282">00a0</div>
<div class="hx" style="left:1026px;top:753.40px;color:#f4f4f4">38 33 32 31 33 63 30 64</div>
<div class="hx" style="left:1249.5px;top:753.40px;color:#f4f4f4">34 66 64 65 33 30 62 30</div>
<div class="hx" style="left:1481px;top:753.40px;color:#f4f4f4">83213c0d</div>
<div class="hx" style="left:1562.5px;top:753.40px;color:#f4f4f4">4fde30b0</div>
<div class="hx" style="left:973px;top:772.15px;color:#828282">00b0</div>
<div class="hx" style="left:1026px;top:772.15px;color:#f4f4f4">37 36 39 36 61 63 66 66</div>
<div class="hx" style="left:1249.5px;top:772.15px;color:#f4f4f4">31 66 65 33 39 63 63 64</div>
<div class="hx" style="left:1481px;top:772.15px;color:#f4f4f4">7696acff</div>
<div class="hx" style="left:1562.5px;top:772.15px;color:#f4f4f4">1fe39ccd</div>
<div class="hx" style="left:973px;top:790.90px;color:#828282">00c0</div>
<div class="hx" style="left:1026px;top:790.90px;color:#f4f4f4">63 30 66 30 36 30 66 66</div>
<div class="hx" style="left:1249.5px;top:790.90px;color:#f4f4f4">62 37 37 62 34 61 34 31</div>
<div class="hx" style="left:1481px;top:790.90px;color:#f4f4f4">c0f060ff</div>
<div class="hx" style="left:1562.5px;top:790.90px;color:#f4f4f4">b77b4a41</div>
<div class="hx" style="left:973px;top:809.65px;color:#828282">00d0</div>
<div class="hx" style="left:1026px;top:809.65px;color:#f4f4f4">30 32 37 32 63 39 33 33</div>
<div class="hx" style="left:1249.5px;top:809.65px;color:#f4f4f4">32 32 32 62 66 65 62 35</div>
<div class="hx" style="left:1481px;top:809.65px;color:#f4f4f4">0272c933</div>
<div class="hx" style="left:1562.5px;top:809.65px;color:#f4f4f4">222bfeb5</div>
<div class="hx" style="left:973px;top:828.40px;color:#828282">00e0</div>
<div class="hx" style="left:1026px;top:828.40px;color:#f4f4f4">34 63 37 66 32 37 37 37</div>
<div class="hx" style="left:1249.5px;top:828.40px;color:#f4f4f4">36 66 64 39 32 31 63 66</div>
<div class="hx" style="left:1481px;top:828.40px;color:#f4f4f4">4c7f2777</div>
<div class="hx" style="left:1562.5px;top:828.40px;color:#f4f4f4">6fd921cf</div>
<div class="hx" style="left:973px;top:847.15px;color:#828282">00f0</div>
<div class="hx" style="left:1026px;top:847.15px;color:#f4f4f4">39 35 31 62 35 36 39 64</div>
<div class="hx" style="left:1249.5px;top:847.15px;color:#f4f4f4">62 33 65 34 33 65 66 34</div>
<div class="hx" style="left:1481px;top:847.15px;color:#f4f4f4">951b569d</div>
<div class="hx" style="left:1562.5px;top:847.15px;color:#f4f4f4">b3e43ef4</div>
<div class="hx" style="left:973px;top:865.90px;color:#828282">0100</div>
<div class="hx" style="left:1026px;top:865.90px;color:#f4f4f4">61 65 65 65 66 64 64 39</div>
<div class="hx" style="left:1249.5px;top:865.90px;color:#f4f4f4">31 38 38 65 35 35 39 35</div>
<div class="hx" style="left:1481px;top:865.90px;color:#f4f4f4">aeeefdd9</div>
<div class="hx" style="left:1562.5px;top:865.90px;color:#f4f4f4">188e5595</div>
<div class="hx" style="left:973px;top:884.65px;color:#828282">0110</div>
<div class="hx" style="left:1026px;top:884.65px;color:#f4f4f4">65 62 39 36 35 34 65 63</div>
<div class="hx" style="left:1249.5px;top:884.65px;color:#f4f4f4">66 38 31 65 32 37 31 63</div>
<div class="hx" style="left:1481px;top:884.65px;color:#f4f4f4">eb9654ec</div>
<div class="hx" style="left:1562.5px;top:884.65px;color:#f4f4f4">f81e271c</div>
<div class="hx" style="left:973px;top:903.40px;color:#828282">0120</div>
<div class="hx" style="left:1026px;top:903.40px;color:#f4f4f4">39 37 33 64 62 37 64 38</div>
<div class="hx" style="left:1249.5px;top:903.40px;color:#f4f4f4">32 38 39 37 38 31 63 31</div>
<div class="hx" style="left:1481px;top:903.40px;color:#f4f4f4">973db7d8</div>
<div class="hx" style="left:1562.5px;top:903.40px;color:#f4f4f4">289781c1</div>
<div class="hx" style="left:973px;top:922.15px;color:#828282">0130</div>
<div class="hx" style="left:1026px;top:922.15px;color:#f4f4f4">65 65 31 39 36 62 61 63</div>
<div class="hx" style="left:1249.5px;top:922.15px;color:#f4f4f4">38 31 38 34 34 31 34 34</div>
<div class="hx" style="left:1481px;top:922.15px;color:#f4f4f4">ee196bac</div>
<div class="hx" style="left:1562.5px;top:922.15px;color:#f4f4f4">81844144</div>
<div class="hx" style="left:973px;top:940.90px;color:#828282">0140</div>
<div class="hx" style="left:1026px;top:940.90px;color:#f4f4f4">38 63 65 32 33 32 61 30</div>
<div class="hx" style="left:1249.5px;top:940.90px;color:#f4f4f4">35 64 30 63 39 65 61 65</div>
<div class="hx" style="left:1481px;top:940.90px;color:#f4f4f4">8ce232a0</div>
<div class="hx" style="left:1562.5px;top:940.90px;color:#f4f4f4">5d0c9eae</div>
<div class="hx" style="left:973px;top:959.65px;color:#828282">0150</div>
<div class="hx" style="left:1026px;top:959.65px;color:#f4f4f4">37 65 32 65 65 62 39 63</div>
<div class="hx" style="left:1249.5px;top:959.65px;color:#f4f4f4">31 32 39 61 30 30 62 33</div>
<div class="hx" style="left:1481px;top:959.65px;color:#f4f4f4">7e2eeb9c</div>
<div class="hx" style="left:1562.5px;top:959.65px;color:#f4f4f4">129a00b3</div>
<div class="a" style="left:1902px;top:564px;width:17px;height:428px;background:#444444;"></div>
<div class="a" style="left:1902px;top:564px;width:17px;height:17px;background:#484848;border:1px solid #5a5a5a"></div>
<svg class="a" style="left:1905px;top:569px" width="11" height="6" viewBox="0 0 11 6"><path d="M0 6 L5.5 0 L11 6Z" fill="#c8c8c8"/></svg>
<div class="a" style="left:1902px;top:581px;width:17px;height:326px;background:#4a4a4a;border:1px solid #606060"></div>
<div class="a" style="left:1902px;top:907px;width:17px;height:1px;background:#1c1c1c;"></div>
<div class="a" style="left:1902px;top:975px;width:17px;height:17px;background:#484848;border:1px solid #5a5a5a"></div>
<svg class="a" style="left:1905px;top:981px" width="11" height="6" viewBox="0 0 11 6"><path d="M0 0 L11 0 L5.5 6Z" fill="#c8c8c8"/></svg>
<div class="a" style="left:0px;top:992px;width:1920px;height:28px;background:#1e1e1e;"></div>
<svg class="a" style="left:12px;top:997px" width="19" height="19" viewBox="0 0 19 19"><defs><radialGradient id="yc" cx="0.5" cy="0.6" r="0.6"><stop offset="0" stop-color="#dcdc50"/><stop offset="1" stop-color="#e8e890"/></radialGradient></defs><circle cx="9.35" cy="9.5" r="8.3" fill="url(#yc)"/></svg>
<svg class="a" style="left:40px;top:997px" width="20" height="19" viewBox="0 0 20 19"><path d="M1.6 1 H15 V18 H1.6Z" fill="#eef0f2"/><path d="M1.6 1 H15 V6 H1.6Z" fill="#3aa8e0"/><path d="M3 3 L6 1 L8 4Z" fill="#e8f8ff"/><g fill="#c8c0c0"><rect x="3" y="8" width="10" height="0.8"/><rect x="3" y="15" width="10" height="0.8"/></g><path d="M5.5 14.5 L16.5 3.5 L18.2 5.2 L7.2 16.2 L4.6 16.8Z" fill="#4a4a4a"/><path d="M16.5 3.5 L17.5 2.5 L19.2 4.2 L18.2 5.2Z" fill="#808080"/></svg>
<div class="a" style="left:1799px;top:993px;width:1px;height:27px;background:#2e2e2e;"></div>
<svg class="a" style="left:0;top:0" width="1920" height="1020" font-family="Liberation Sans"><text x="29.00" y="19.9" font-size="16" fill="#f4f4f4" textLength="59.06" lengthAdjust="spacingAndGlyphs">1.pcapng</text><text x="13.30" y="46.7" font-size="15" fill="#f2f2f2" textLength="20.74" lengthAdjust="spacingAndGlyphs">File</text><rect x="13.30" y="48.0" width="7.86" height="1" fill="#f2f2f2"/><text x="53.30" y="46.7" font-size="15" fill="#f2f2f2" textLength="24.17" lengthAdjust="spacingAndGlyphs">Edit</text><rect x="53.30" y="48.0" width="9.36" height="1" fill="#f2f2f2"/><text x="96.30" y="46.7" font-size="15" fill="#f2f2f2" textLength="31.69" lengthAdjust="spacingAndGlyphs">View</text><rect x="96.30" y="48.0" width="9.84" height="1" fill="#f2f2f2"/><text x="146.30" y="46.7" font-size="15" fill="#f2f2f2" textLength="19.01" lengthAdjust="spacingAndGlyphs">Go</text><rect x="146.30" y="48.0" width="11.08" height="1" fill="#f2f2f2"/><text x="183.80" y="46.7" font-size="15" fill="#f2f2f2" textLength="51.99" lengthAdjust="spacingAndGlyphs">Capture</text><rect x="183.80" y="48.0" width="10.55" height="1" fill="#f2f2f2"/><text x="253.70" y="46.7" font-size="15" fill="#f2f2f2" textLength="51.29" lengthAdjust="spacingAndGlyphs">Analyze</text><rect x="253.70" y="48.0" width="9.62" height="1" fill="#f2f2f2"/><text x="321.50" y="46.7" font-size="15" fill="#f2f2f2" textLength="58.52" lengthAdjust="spacingAndGlyphs">Statistics</text><rect x="321.50" y="48.0" width="9.76" height="1" fill="#f2f2f2"/><text x="398.00" y="46.7" font-size="15" fill="#f2f2f2" textLength="67.01" lengthAdjust="spacingAndGlyphs">Telephony</text><rect x="457.66" y="48.0" width="7.35" height="1" fill="#f2f2f2"/><text x="482.70" y="46.7" font-size="15" fill="#f2f2f2" textLength="54.30" lengthAdjust="spacingAndGlyphs">Wireless</text><rect x="482.70" y="48.0" width="13.37" height="1" fill="#f2f2f2"/><text x="554.40" y="46.7" font-size="15" fill="#f2f2f2" textLength="35.42" lengthAdjust="spacingAndGlyphs">Tools</text><rect x="554.40" y="48.0" width="9.27" height="1" fill="#f2f2f2"/><text x="608.40" y="46.7" font-size="15" fill="#f2f2f2" textLength="29.57" lengthAdjust="spacingAndGlyphs">Help</text><rect x="608.40" y="48.0" width="10.38" height="1" fill="#f2f2f2"/><text x="33.00" y="118" font-size="15" fill="#a4a4a4" textLength="207.00" lengthAdjust="spacingAndGlyphs">Apply a display filter ... &lt;Ctrl-/&gt;</text><text x="4.70" y="152" font-size="16" fill="#f6f6f6" textLength="23.62" lengthAdjust="spacingAndGlyphs">No.</text><text x="138.75" y="152" font-size="16" fill="#f6f6f6" textLength="33.21" lengthAdjust="spacingAndGlyphs">Time</text><text x="262.50" y="152" font-size="16" fill="#f6f6f6" textLength="48.45" lengthAdjust="spacingAndGlyphs">Source</text><text x="450.50" y="152" font-size="16" fill="#f6f6f6" textLength="80.55" lengthAdjust="spacingAndGlyphs">Destination</text><text x="638.00" y="152" font-size="16" fill="#f6f6f6" textLength="58.95" lengthAdjust="spacingAndGlyphs">Protocol</text><text x="708.75" y="152" font-size="16" fill="#f6f6f6" textLength="48.19" lengthAdjust="spacingAndGlyphs">Length</text><text x="763.00" y="152" font-size="16" fill="#f6f6f6" textLength="26.94" lengthAdjust="spacingAndGlyphs">Info</text><text x="79.50" y="1013" font-size="16" fill="#f2f2f2" textLength="59.46" lengthAdjust="spacingAndGlyphs">1.pcapng</text><text x="1285.40" y="1013" font-size="16" fill="#f2f2f2" textLength="94.59" lengthAdjust="spacingAndGlyphs">Packets: 11441</text><text x="1818.00" y="1013" font-size="16" fill="#f2f2f2" textLength="95.94" lengthAdjust="spacingAndGlyphs">Profile: Default</text></svg>
</body></html>
